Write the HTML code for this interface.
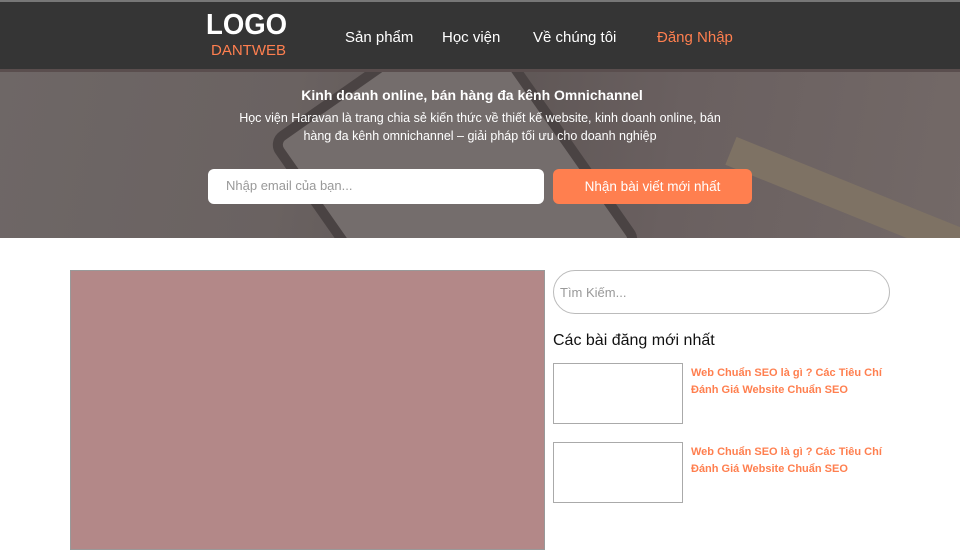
<!DOCTYPE html>
<html><head><meta charset="utf-8"><style>
*{margin:0;padding:0;box-sizing:border-box}
body{width:960px;height:540px;overflow:hidden;background:#fff;font-family:"Liberation Sans",sans-serif;position:relative}
.hdr{position:absolute;left:0;top:0;width:960px;height:72px;background:#353535;border-top:2px solid #777;border-bottom:3px solid #5a4e4e}
.logo{position:absolute;left:206px;top:9px;color:#fff;font-weight:bold;font-size:29px;transform:scaleX(0.95);transform-origin:left}
.sub{position:absolute;left:211px;top:42px;color:#ff7f4f;font-size:15px}
.nav{position:absolute;top:29px;color:#fff;font-size:15px}
.hero{position:absolute;left:0;top:72px;width:960px;height:166px;background:linear-gradient(100deg,#6e6766 0%,#6a6261 30%,#5e5655 50%,#6a6060 70%,#736967 100%);overflow:hidden}
.tab{position:absolute;left:330px;top:-30px;width:250px;height:300px;background:#746d6c;transform:rotate(-35deg);border:10px solid #4a4343;border-radius:16px}
.wood{position:absolute;left:720px;top:120px;width:300px;height:30px;background:#7e7264;transform:rotate(22deg)}
.h1{position:absolute;top:87px;width:944px;text-align:center;color:#fff;font-weight:bold;font-size:14px}
.p{position:absolute;top:109px;left:200px;width:560px;text-align:center;color:#fff;font-size:12.5px;line-height:18px}
.inp{position:absolute;left:208px;top:169px;width:336px;height:35px;background:#fff;border-radius:6px;color:#999;font-size:13px;padding:9px 18px}
.btn{position:absolute;left:553px;top:169px;width:199px;height:35px;background:#ff7f4f;border-radius:6px;color:#fff;font-size:13.5px;text-align:center;line-height:35px}
.img{position:absolute;left:70px;top:270px;width:475px;height:280px;background:#b38888;border:1px solid #999}
.srch{position:absolute;left:553px;top:270px;width:337px;height:44px;border:1px solid #bbb;border-radius:22px;color:#999;font-size:13px;padding:14px 6px}
.t{position:absolute;left:553px;top:332px;font-size:16px;color:#111}
.th{position:absolute;left:553px;width:130px;height:61px;border:1px solid #aaa}
.lk{position:absolute;left:691px;color:#ff7f4f;font-size:11px;font-weight:bold;line-height:17px;width:200px}
</style></head><body>
<div class="hdr"></div>
<div class="logo">LOGO</div><div class="sub">DANTWEB</div>
<div class="nav" style="left:345px">Sản phẩm</div>
<div class="nav" style="left:442px">Học viện</div>
<div class="nav" style="left:533px">Về chúng tôi</div>
<div class="nav" style="left:657px;color:#ff7f4f">Đăng Nhập</div>
<div class="hero"><div class="tab"></div><div class="wood"></div></div>
<div class="h1">Kinh doanh online, bán hàng đa kênh Omnichannel</div>
<div class="p">Học viện Haravan là trang chia sẻ kiến thức về thiết kế website, kinh doanh online, bán<br>hàng đa kênh omnichannel – giải pháp tối ưu cho doanh nghiệp</div>
<div class="inp">Nhập email của bạn...</div>
<div class="btn">Nhận bài viết mới nhất</div>
<div class="img"></div>
<div class="srch">Tìm Kiếm...</div>
<div class="t">Các bài đăng mới nhất</div>
<div class="th" style="top:363px"></div>
<div class="lk" style="top:365px">Web Chuẩn SEO là gì ? Các Tiêu Chí<br>Đánh Giá Website Chuẩn SEO</div>
<div class="th" style="top:442px"></div>
<div class="lk" style="top:444px">Web Chuẩn SEO là gì ? Các Tiêu Chí<br>Đánh Giá Website Chuẩn SEO</div>
</body></html>
